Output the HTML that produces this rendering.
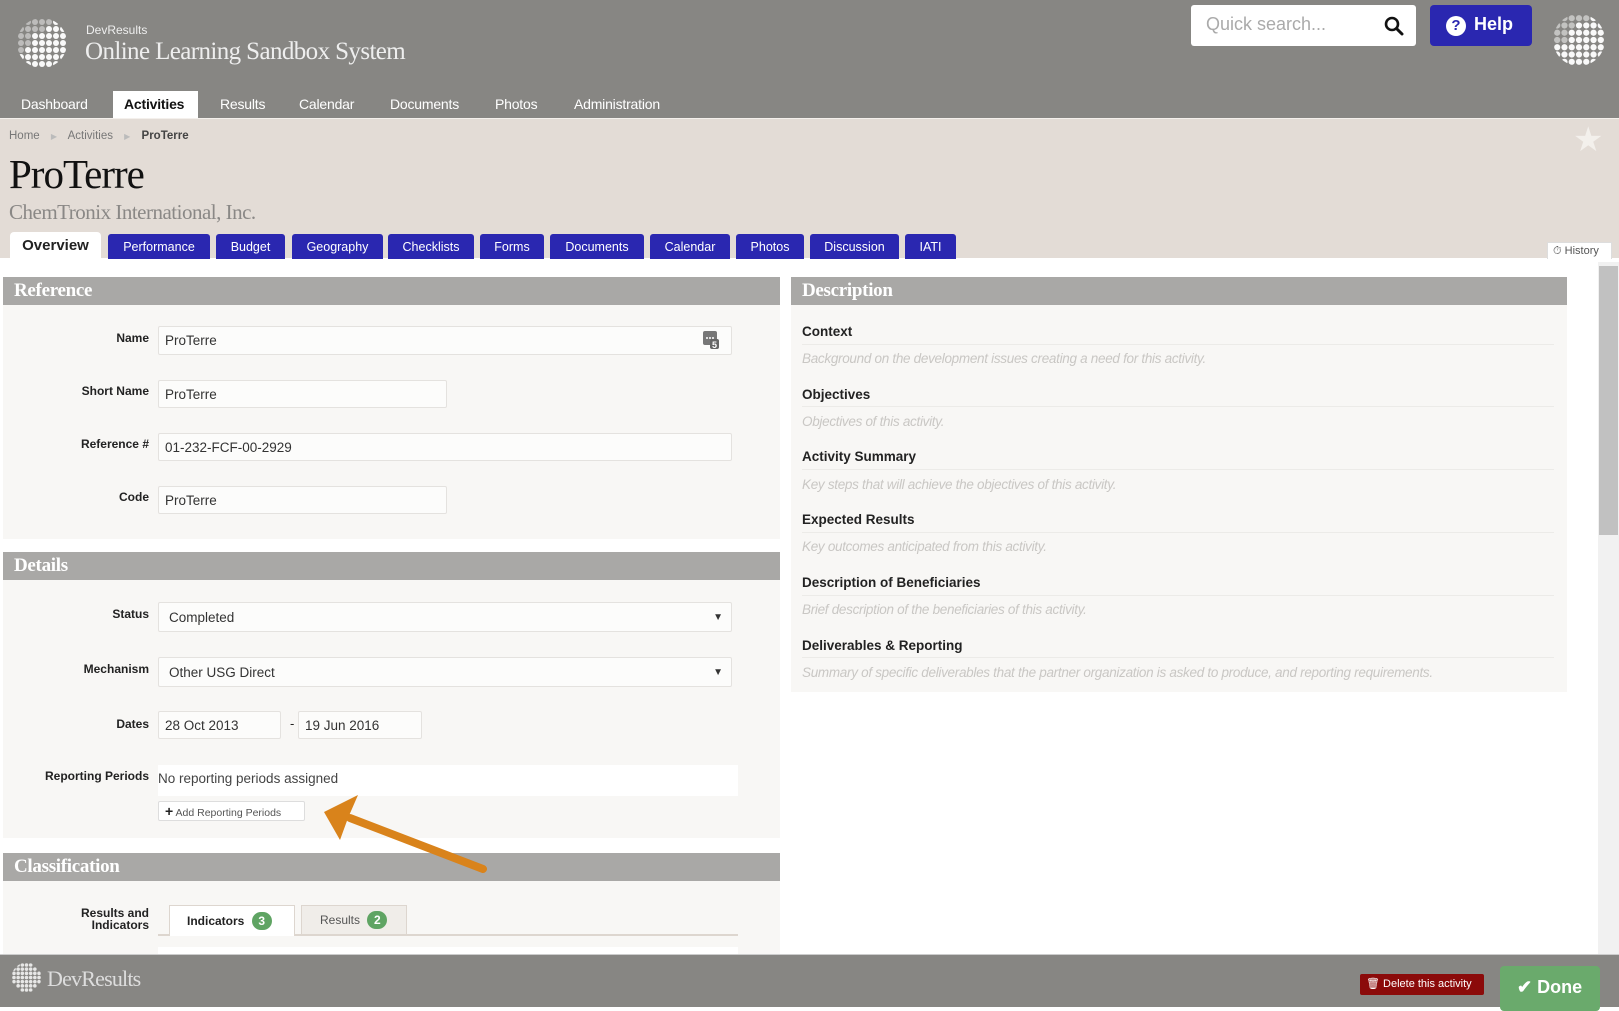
<!DOCTYPE html>
<html><head><meta charset="utf-8"><style>
*{box-sizing:border-box;margin:0;padding:0}
body{width:1619px;height:1007px;overflow:hidden;position:relative;background:#fff;font-family:"Liberation Sans",sans-serif;color:#222}
.abs{position:absolute}
.hdr{left:0;top:0;width:1619px;height:118px;background:#878683}
.nav{top:91px;height:27px;font-size:14px;color:#fff;line-height:27px;padding:0 11px;letter-spacing:-.2px}
.nav.act{background:#fff;color:#111;font-weight:bold}
.crumbs{left:0;top:118px;width:1619px;height:140px;background:#e3dcd6;border-top:1px solid #f4f0ec}
.tab{top:234px;height:25px;background:#2a27b0;color:#fff;font-size:12.5px;text-align:center;line-height:26px;border-radius:3px 3px 0 0}
.panel{background:#f8f7f5}
.ph{background:#a9a8a6;color:#fff;font-family:"Liberation Serif",serif;font-size:19px;font-weight:bold;padding-left:11px;line-height:28px;height:28px;letter-spacing:-.3px}
.lbl{font-size:12px;font-weight:bold;text-align:right;width:149px;left:0}
.inp{background:#fcfcfb;border:1px solid #e4e2df;border-radius:2px;font-size:13.5px;color:#333;padding-left:6px;line-height:27px}
.dl{font-size:13.5px;font-weight:bold;left:802px;color:#222}
.dh{font-size:13.5px;font-style:italic;color:#c9c7c4;left:802px;letter-spacing:-.3px}
.dline{left:802px;width:752px;height:1px;background:#ecebe8}
</style></head><body>
<svg width="0" height="0" style="position:absolute"><defs><clipPath id="c1"><circle cx="26" cy="26" r="25"/></clipPath></defs></svg>
<div class="abs hdr"></div>
<svg class="abs" style="left:16px;top:17px" width="52" height="52" viewBox="0 0 52 52">
<g clip-path="url(#c1)" fill="#fff">
<g opacity=".45"><circle cx="5" cy="5" r="3"/><circle cx="12" cy="5" r="3"/><circle cx="19" cy="5" r="3"/><circle cx="26" cy="5" r="3"/><circle cx="33" cy="5" r="3"/><circle cx="5" cy="12" r="3"/><circle cx="12" cy="12" r="3"/><circle cx="19" cy="12" r="3"/><circle cx="26" cy="12" r="3"/><circle cx="5" cy="19" r="3"/><circle cx="12" cy="19" r="3"/><circle cx="5" cy="26" r="3"/><circle cx="12" cy="26" r="3"/><circle cx="5" cy="33" r="3"/></g>
<g opacity=".95"><circle cx="40" cy="5" r="3"/><circle cx="47" cy="5" r="3"/><circle cx="33" cy="12" r="3"/><circle cx="40" cy="12" r="3"/><circle cx="47" cy="12" r="3"/><circle cx="19" cy="19" r="3"/><circle cx="26" cy="19" r="3"/><circle cx="33" cy="19" r="3"/><circle cx="40" cy="19" r="3"/><circle cx="47" cy="19" r="3"/><circle cx="19" cy="26" r="3"/><circle cx="26" cy="26" r="3"/><circle cx="33" cy="26" r="3"/><circle cx="40" cy="26" r="3"/><circle cx="47" cy="26" r="3"/><circle cx="12" cy="33" r="3"/><circle cx="19" cy="33" r="3"/><circle cx="26" cy="33" r="3"/><circle cx="33" cy="33" r="3"/><circle cx="40" cy="33" r="3"/><circle cx="47" cy="33" r="3"/><circle cx="5" cy="40" r="3"/><circle cx="12" cy="40" r="3"/><circle cx="19" cy="40" r="3"/><circle cx="26" cy="40" r="3"/><circle cx="33" cy="40" r="3"/><circle cx="40" cy="40" r="3"/><circle cx="47" cy="40" r="3"/><circle cx="12" cy="47" r="3"/><circle cx="19" cy="47" r="3"/><circle cx="26" cy="47" r="3"/><circle cx="33" cy="47" r="3"/><circle cx="40" cy="47" r="3"/></g></g></svg>
<div class="abs" style="left:86px;top:23px;font-size:12px;color:#eee">DevResults</div>
<div class="abs" style="left:85px;top:38px;font-size:25px;color:#eee;font-family:'Liberation Serif',serif;letter-spacing:-.6px">Online Learning Sandbox System</div>
<div class="abs" style="left:1191px;top:5px;width:225px;height:41px;background:#fff;border-radius:3px"></div>
<div class="abs" style="left:1206px;top:14px;font-size:18px;color:#aaa">Quick search...</div>
<svg class="abs" style="left:1384px;top:16px" width="20" height="20" viewBox="0 0 20 20"><circle cx="8" cy="8" r="6" fill="none" stroke="#111" stroke-width="2.6"/><path d="M12.5 12.5L18 18" stroke="#111" stroke-width="3" stroke-linecap="round"/></svg>
<div class="abs" style="left:1430px;top:5px;width:102px;height:41px;background:#2a27b0;border-radius:4px"></div>
<div class="abs" style="left:1446px;top:16px;width:20px;height:20px;border-radius:50%;background:#fff;color:#2a27b0;font-weight:bold;font-size:15px;text-align:center;line-height:20px">?</div>
<div class="abs" style="left:1474px;top:14px;font-size:18px;color:#fff;font-weight:bold">Help</div>
<svg class="abs" style="left:1552px;top:13px" width="54" height="54" viewBox="0 0 52 52">
<g clip-path="url(#c1)" fill="#fff"><g opacity=".5"><circle cx="5" cy="5" r="3"/><circle cx="12" cy="5" r="3"/><circle cx="19" cy="5" r="3"/><circle cx="26" cy="5" r="3"/><circle cx="33" cy="5" r="3"/><circle cx="5" cy="12" r="3"/><circle cx="12" cy="12" r="3"/><circle cx="19" cy="12" r="3"/><circle cx="5" cy="19" r="3"/><circle cx="12" cy="19" r="3"/><circle cx="5" cy="26" r="3"/><circle cx="12" cy="26" r="3"/></g>
<g opacity=".95"><circle cx="40" cy="5" r="3"/><circle cx="26" cy="12" r="3"/><circle cx="33" cy="12" r="3"/><circle cx="40" cy="12" r="3"/><circle cx="47" cy="12" r="3"/><circle cx="19" cy="19" r="3"/><circle cx="26" cy="19" r="3"/><circle cx="33" cy="19" r="3"/><circle cx="40" cy="19" r="3"/><circle cx="47" cy="19" r="3"/><circle cx="19" cy="26" r="3"/><circle cx="26" cy="26" r="3"/><circle cx="33" cy="26" r="3"/><circle cx="40" cy="26" r="3"/><circle cx="47" cy="26" r="3"/><circle cx="5" cy="33" r="3"/><circle cx="12" cy="33" r="3"/><circle cx="19" cy="33" r="3"/><circle cx="26" cy="33" r="3"/><circle cx="33" cy="33" r="3"/><circle cx="40" cy="33" r="3"/><circle cx="47" cy="33" r="3"/><circle cx="5" cy="40" r="3"/><circle cx="12" cy="40" r="3"/><circle cx="19" cy="40" r="3"/><circle cx="26" cy="40" r="3"/><circle cx="33" cy="40" r="3"/><circle cx="40" cy="40" r="3"/><circle cx="47" cy="40" r="3"/><circle cx="12" cy="47" r="3"/><circle cx="19" cy="47" r="3"/><circle cx="26" cy="47" r="3"/><circle cx="33" cy="47" r="3"/><circle cx="40" cy="47" r="3"/></g></g></svg>
<div class="abs nav" style="left:10px">Dashboard</div>
<div class="abs nav act" style="left:113px;width:85px">Activities</div>
<div class="abs nav" style="left:209px">Results</div>
<div class="abs nav" style="left:288px">Calendar</div>
<div class="abs nav" style="left:379px">Documents</div>
<div class="abs nav" style="left:484px">Photos</div>
<div class="abs nav" style="left:563px">Administration</div>

<div class="abs crumbs"></div>
<div class="abs" style="left:9px;top:130px;font-size:11.5px;color:#777">Home <span style="color:#bbb;font-size:8px;margin:0 8px">&#9654;</span> Activities <span style="color:#bbb;font-size:8px;margin:0 8px">&#9654;</span> <b style="color:#444">ProTerre</b></div>
<div class="abs" style="left:1573px;top:120px;font-size:34px;color:#f3f0ec">&#9733;</div>
<div class="abs" style="left:9px;top:150px;font-size:41px;font-family:'Liberation Serif',serif;color:#111;letter-spacing:-1px">ProTerre</div>
<div class="abs" style="left:9px;top:200px;font-size:21px;font-family:'Liberation Serif',serif;color:#8a8886;letter-spacing:-.5px">ChemTronix International, Inc.</div>
<div class="abs" style="left:10px;top:232px;width:91px;height:27px;background:#fff;border-radius:4px 4px 0 0;font-size:15px;font-weight:bold;text-align:center;line-height:27px">Overview</div>
<div class="abs tab" style="left:108px;width:102px">Performance</div>
<div class="abs tab" style="left:216px;width:69px">Budget</div>
<div class="abs tab" style="left:292px;width:91px">Geography</div>
<div class="abs tab" style="left:388px;width:86px">Checklists</div>
<div class="abs tab" style="left:480px;width:64px">Forms</div>
<div class="abs tab" style="left:550px;width:94px">Documents</div>
<div class="abs tab" style="left:650px;width:80px">Calendar</div>
<div class="abs tab" style="left:736px;width:68px">Photos</div>
<div class="abs tab" style="left:810px;width:89px">Discussion</div>
<div class="abs tab" style="left:905px;width:51px">IATI</div>
<div class="abs" style="left:1547px;top:242px;width:65px;height:17px;background:#fff;border:1px solid #ddd;border-bottom:none;font-size:11px;color:#555;line-height:16px;padding-left:5px">&#9201; History</div>

<div class="abs" style="left:1598px;top:262px;width:21px;height:692px;background:#f1f1f1"></div>
<div class="abs" style="left:1599px;top:266px;width:19px;height:269px;background:#c1c1c1"></div>

<div class="abs panel" style="left:3px;top:277px;width:777px;height:262px"></div>
<div class="abs ph" style="left:3px;top:277px;width:777px">Reference</div>
<div class="abs lbl" style="top:331px">Name</div>
<div class="abs inp" style="left:158px;top:326px;width:574px;height:29px">ProTerre</div>
<svg class="abs" style="left:702px;top:330px" width="18" height="20" viewBox="0 0 18 20"><rect x="1" y="1" width="14" height="14" rx="2" fill="#777"/><rect x="8" y="9" width="9" height="10" rx="2" fill="#666"/><text x="10" y="18" font-size="9" fill="#fff" font-family="Liberation Sans" font-weight="bold">5</text><circle cx="5" cy="8" r="1" fill="#fff"/><circle cx="8" cy="8" r="1" fill="#fff"/><circle cx="11" cy="8" r="1" fill="#fff"/></svg>
<div class="abs lbl" style="top:384px">Short Name</div>
<div class="abs inp" style="left:158px;top:380px;width:289px;height:28px">ProTerre</div>
<div class="abs lbl" style="top:437px">Reference #</div>
<div class="abs inp" style="left:158px;top:433px;width:574px;height:28px">01-232-FCF-00-2929</div>
<div class="abs lbl" style="top:490px">Code</div>
<div class="abs inp" style="left:158px;top:486px;width:289px;height:28px">ProTerre</div>

<div class="abs panel" style="left:3px;top:552px;width:777px;height:286px"></div>
<div class="abs ph" style="left:3px;top:552px;width:777px">Details</div>
<div class="abs lbl" style="top:607px">Status</div>
<div class="abs inp" style="left:158px;top:602px;width:574px;height:30px;line-height:30px;padding-left:10px">Completed<span style="position:absolute;right:8px;font-size:10px">&#9660;</span></div>
<div class="abs lbl" style="top:662px">Mechanism</div>
<div class="abs inp" style="left:158px;top:657px;width:574px;height:30px;line-height:30px;padding-left:10px">Other USG Direct<span style="position:absolute;right:8px;font-size:10px">&#9660;</span></div>
<div class="abs lbl" style="top:717px">Dates</div>
<div class="abs inp" style="left:158px;top:711px;width:123px;height:28px">28 Oct 2013</div>
<div class="abs" style="left:290px;top:716px;font-size:13px">-</div>
<div class="abs inp" style="left:298px;top:711px;width:124px;height:28px">19 Jun 2016</div>
<div class="abs lbl" style="top:769px">Reporting Periods</div>
<div class="abs" style="left:158px;top:765px;width:580px;height:31px;background:#fff;font-size:13.5px;color:#444;line-height:28px">No reporting periods assigned</div>
<div class="abs" style="left:158px;top:801px;width:147px;height:20px;background:#fff;border:1px solid #ddd;border-radius:2px;font-size:10.5px;color:#555;line-height:18px;padding-left:6px"><b style="color:#222;font-size:14px">+</b> Add Reporting Periods</div>

<div class="abs panel" style="left:3px;top:853px;width:777px;height:101px"></div>
<div class="abs ph" style="left:3px;top:853px;width:777px">Classification</div>
<div class="abs lbl" style="top:907px;line-height:12px">Results and<br>Indicators</div>
<div class="abs" style="left:158px;top:934px;width:580px;height:2px;background:#ddd6cf"></div>
<div class="abs" style="left:169px;top:905px;width:126px;height:31px;background:#fff;border:1px solid #ddd6cf;border-bottom:none;font-size:12px;font-weight:bold;line-height:30px;padding-left:17px">Indicators <span style="display:inline-block;width:20px;height:18px;border-radius:9px;background:#5fa463;color:#fff;text-align:center;line-height:18px;margin-left:4px">3</span></div>
<div class="abs" style="left:301px;top:905px;width:106px;height:29px;background:#f0ede9;border:1px solid #ddd6cf;border-bottom:none;font-size:12px;color:#555;line-height:28px;padding-left:18px">Results <span style="display:inline-block;width:20px;height:18px;border-radius:9px;background:#5fa463;color:#fff;text-align:center;line-height:18px;margin-left:4px;font-weight:bold">2</span></div>
<div class="abs" style="left:158px;top:947px;width:580px;height:7px;background:#fff"></div>

<div class="abs panel" style="left:791px;top:277px;width:776px;height:415px"></div>
<div class="abs ph" style="left:791px;top:277px;width:776px">Description</div>
<div class="abs dl" style="top:324px">Context</div><div class="abs dline" style="top:344px"></div>
<div class="abs dh" style="top:351px">Background on the development issues creating a need for this activity.</div>
<div class="abs dl" style="top:387px">Objectives</div><div class="abs dline" style="top:406px"></div>
<div class="abs dh" style="top:414px">Objectives of this activity.</div>
<div class="abs dl" style="top:449px">Activity Summary</div><div class="abs dline" style="top:469px"></div>
<div class="abs dh" style="top:477px">Key steps that will achieve the objectives of this activity.</div>
<div class="abs dl" style="top:512px">Expected Results</div><div class="abs dline" style="top:532px"></div>
<div class="abs dh" style="top:539px">Key outcomes anticipated from this activity.</div>
<div class="abs dl" style="top:575px">Description of Beneficiaries</div><div class="abs dline" style="top:595px"></div>
<div class="abs dh" style="top:602px">Brief description of the beneficiaries of this activity.</div>
<div class="abs dl" style="top:638px">Deliverables &amp; Reporting</div><div class="abs dline" style="top:657px"></div>
<div class="abs dh" style="top:665px">Summary of specific deliverables that the partner organization is asked to produce, and reporting requirements.</div>

<svg class="abs" style="left:300px;top:790px" width="210" height="100" viewBox="0 0 210 100">
<path d="M183 79L50 28" stroke="#d9831b" stroke-width="8" stroke-linecap="round"/>
<path d="M24 22L58 5L48 28L40 50Z" fill="#d9831b"/></svg>

<div class="abs" style="left:0;top:954px;width:1619px;height:53px;background:#878683;border-top:1px solid #ccc"></div>
<svg class="abs" style="left:11px;top:962px" width="31" height="31" viewBox="0 0 52 52"><g clip-path="url(#c1)" fill="#fff" opacity=".8"><circle cx="5" cy="12" r="3"/><circle cx="12" cy="5" r="3"/><circle cx="19" cy="5" r="3"/><circle cx="26" cy="5" r="3"/><circle cx="33" cy="5" r="3"/><circle cx="12" cy="12" r="3"/><circle cx="19" cy="12" r="3"/><circle cx="26" cy="12" r="3"/><circle cx="33" cy="12" r="3"/><circle cx="40" cy="12" r="3"/><circle cx="5" cy="19" r="3"/><circle cx="12" cy="19" r="3"/><circle cx="19" cy="19" r="3"/><circle cx="26" cy="19" r="3"/><circle cx="33" cy="19" r="3"/><circle cx="40" cy="19" r="3"/><circle cx="47" cy="19" r="3"/><circle cx="5" cy="26" r="3"/><circle cx="12" cy="26" r="3"/><circle cx="19" cy="26" r="3"/><circle cx="26" cy="26" r="3"/><circle cx="33" cy="26" r="3"/><circle cx="40" cy="26" r="3"/><circle cx="47" cy="26" r="3"/><circle cx="5" cy="33" r="3"/><circle cx="12" cy="33" r="3"/><circle cx="19" cy="33" r="3"/><circle cx="26" cy="33" r="3"/><circle cx="33" cy="33" r="3"/><circle cx="40" cy="33" r="3"/><circle cx="47" cy="33" r="3"/><circle cx="12" cy="40" r="3"/><circle cx="19" cy="40" r="3"/><circle cx="26" cy="40" r="3"/><circle cx="33" cy="40" r="3"/><circle cx="40" cy="40" r="3"/><circle cx="19" cy="47" r="3"/><circle cx="26" cy="47" r="3"/><circle cx="33" cy="47" r="3"/></g></svg>
<div class="abs" style="left:47px;top:966px;font-size:22px;font-family:'Liberation Serif',serif;color:#ddd;letter-spacing:-.8px">DevResults</div>
<div class="abs" style="left:1360px;top:974px;width:124px;height:21px;background:#8b0a0a;border-radius:2px;color:#fff;font-size:11px;line-height:21px;padding-left:6px">&#128465; Delete this activity</div>
<div class="abs" style="left:1500px;top:966px;width:100px;height:45px;background:#6aaa6c;border-radius:4px;color:#fff;font-size:18px;font-weight:bold;line-height:42px;padding-left:17px">&#10004; Done</div>
</body></html>
